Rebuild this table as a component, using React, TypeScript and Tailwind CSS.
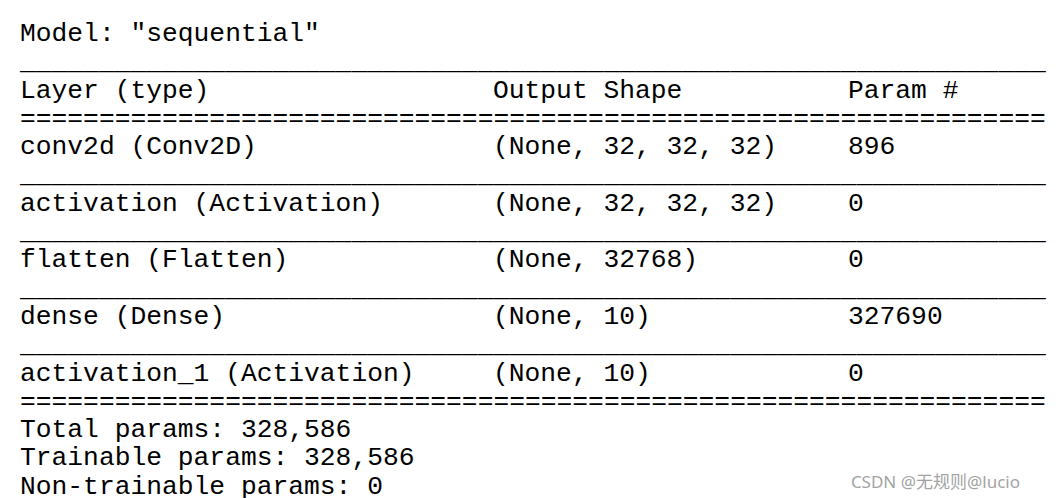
import React from "react";

const U = "_".repeat(65);
const E = "=".repeat(65);

const rows: [string, string, string][] = [
  ["conv2d (Conv2D)", "(None, 32, 32, 32)", "896"],
  ["activation (Activation)", "(None, 32, 32, 32)", "0"],
  ["flatten (Flatten)", "(None, 32768)", "0"],
  ["dense (Dense)", "(None, 10)", "327690"],
  ["activation_1 (Activation)", "(None, 10)", "0"],
];

function Row({ a, b, c }: { a: string; b: string; c: string }) {
  return (
    <div className="flex whitespace-pre">
      <div className="w-[473px] shrink-0">{a}</div>
      <div className="w-[355px] shrink-0">{b}</div>
      <div>{c}</div>
    </div>
  );
}

export default function App() {
  return (
    <div className="relative w-[1056px] h-[498px] overflow-hidden bg-white">
      <div
        className="pl-[20px] pt-[20px] text-[26.3px] leading-[28.3px] text-black whitespace-pre"
        style={{ fontFamily: '"Liberation Mono", "Courier New", monospace' }}
      >
        <div>Model: "sequential"</div>
        <div>{U}</div>
        <Row a="Layer (type)" b="Output Shape" c="Param #" />
        <div>{E}</div>
        {rows.map((r, i) => (
          <React.Fragment key={i}>
            <Row a={r[0]} b={r[1]} c={r[2]} />
            {i < rows.length - 1 ? <div>{U}</div> : <div>{E}</div>}
          </React.Fragment>
        ))}
        <div>Total params: 328,586</div>
        <div>Trainable params: 328,586</div>
        <div>Non-trainable params: 0</div>
      </div>
      <div
        className="absolute right-[36px] bottom-[6px] text-[17px] leading-[20px] text-[#a3a3a3]"
        style={{ fontFamily: '"Noto Sans", "Noto Sans CJK SC", sans-serif' }}
      >
        CSDN @无规则@lucio
      </div>
    </div>
  );
}
